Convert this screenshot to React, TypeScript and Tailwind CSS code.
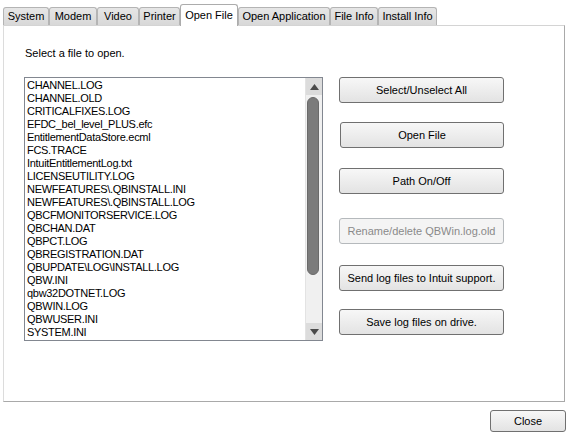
import React from "react";

const tabs: { label: string; w: string; active?: boolean }[] = [
  { label: "System", w: "w-[46px]" },
  { label: "Modem", w: "w-[48px]" },
  { label: "Video", w: "w-[42px]" },
  { label: "Printer", w: "w-[41px]" },
  { label: "Open File", w: "w-[58px]", active: true },
  { label: "Open Application", w: "w-[92px]" },
  { label: "File Info", w: "w-[48px]" },
  { label: "Install Info", w: "w-[59px]" },
];

const files = [
  "CHANNEL.LOG",
  "CHANNEL.OLD",
  "CRITICALFIXES.LOG",
  "EFDC_bel_level_PLUS.efc",
  "EntitlementDataStore.ecml",
  "FCS.TRACE",
  "IntuitEntitlementLog.txt",
  "LICENSEUTILITY.LOG",
  "NEWFEATURES\\.QBINSTALL.INI",
  "NEWFEATURES\\.QBINSTALL.LOG",
  "QBCFMONITORSERVICE.LOG",
  "QBCHAN.DAT",
  "QBPCT.LOG",
  "QBREGISTRATION.DAT",
  "QBUPDATE\\LOG\\INSTALL.LOG",
  "QBW.INI",
  "qbw32DOTNET.LOG",
  "QBWIN.LOG",
  "QBWUSER.INI",
  "SYSTEM.INI",
];

function WinButton({
  label,
  className = "",
  disabled = false,
}: {
  label: string;
  className?: string;
  disabled?: boolean;
}) {
  return (
    <div
      className={
        "flex items-center justify-center rounded-[3px] border text-[11px] leading-[13px] " +
        (disabled
          ? "border-[#b5b9bc] bg-[#f4f4f4] text-[#8a8a8a] "
          : "border-[#707070] bg-linear-to-b from-[#f7f7f7] to-[#e3e3e3] text-black ") +
        className
      }
    >
      {label}
    </div>
  );
}

export default function App() {
  return (
    <div
      className="w-[579px] h-[447px] bg-white px-[3px] pt-[4px] text-black"
      style={{ fontFamily: '"Liberation Sans", Arial, sans-serif' }}
    >
      {/* Tabs */}
      <div className="relative z-10 flex h-[21px] items-end">
        {tabs.map((t) =>
          t.active ? (
            <div
              key={t.label}
              className={`${t.w} -mb-px flex h-[22px] items-start justify-center rounded-t-[3px] border border-b-0 border-[#acacac] bg-white pt-[4px] text-[11px] leading-[13px]`}
            >
              {t.label}
            </div>
          ) : (
            <div
              key={t.label}
              className={`${t.w} flex h-[18px] items-start justify-center rounded-t-[3px] border border-b-0 border-[#b4b4b4] bg-linear-to-b from-[#e6e6e6] to-[#d8d8d8] pt-[2px] text-[11px] leading-[13px]`}
            >
              {t.label}
            </div>
          )
        )}
      </div>

      {/* Panel */}
      <div className="h-[377px] w-[562px] border border-t-[#d4d4d4] border-l-[#dcdcdc] border-r-[#a9a9a9] border-b-[#a9a9a9] bg-white pl-[20px] pt-[21px]">
        <div className="ml-[1px] text-[11px] leading-[13px]">Select a file to open.</div>
        <div className="mt-[17px] flex">
          {/* Listbox */}
          <div className="flex h-[264px] w-[299px] border border-[#828790] bg-white">
            <div className="flex-1 pl-[2px] pt-[1px] text-[11px] leading-[13px] tracking-[-0.3px]">
              {files.map((f) => (
                <div key={f} className="h-[13px] whitespace-nowrap">
                  {f}
                </div>
              ))}
            </div>
            {/* Scrollbar */}
            <div className="flex w-[17px] flex-col border-l border-[#e3e3e3] bg-[#f0f0f0]">
              <div className="flex h-[17px] items-center justify-center bg-[#dcdcdc]">
                <svg width="9" height="6" viewBox="0 0 9 6">
                  <polygon points="4.5,0 9,6 0,6" fill="#4a4a4a" />
                </svg>
              </div>
              <div className="flex-1 pt-[2px]">
                <div className="ml-[1px] h-[178px] w-[12px] rounded-[6px] border border-[#6a6a6a] bg-[#7b7b7b]" />
              </div>
              <div className="flex h-[17px] items-center justify-center bg-[#dcdcdc]">
                <svg width="9" height="6" viewBox="0 0 9 6">
                  <polygon points="0,0 9,0 4.5,6" fill="#4a4a4a" />
                </svg>
              </div>
            </div>
          </div>

          {/* Buttons */}
          <div className="ml-[16px] flex w-[165px] flex-col">
            <WinButton label="Select/Unselect All" className="h-[26px]" />
            <WinButton label="Open File" className="mt-[19px] ml-[1px] h-[26px]" />
            <WinButton label="Path On/Off" className="mt-[20px] h-[26px]" />
            <WinButton label="Rename/delete QBWin.log.old" className="mt-[24px] h-[26px]" disabled />
            <WinButton label="Send log files to Intuit support." className="mt-[21px] h-[26px]" />
            <WinButton label="Save log files on drive." className="mt-[18px] h-[26px]" />
          </div>
        </div>
      </div>

      {/* Close */}
      <div className="mt-[8px] flex justify-end pr-[10px]">
        <WinButton label="Close" className="h-[22px] w-[76px]" />
      </div>
    </div>
  );
}
